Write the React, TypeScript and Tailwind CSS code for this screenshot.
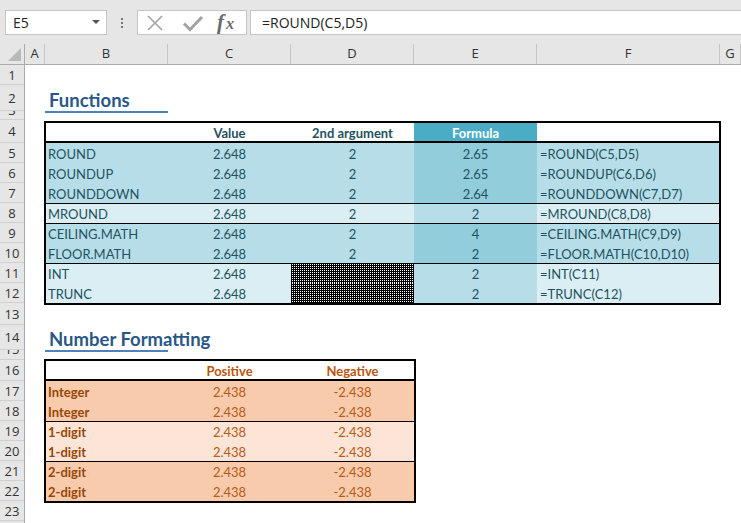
import React from "react";

const cellFont = "font-['Lato','Noto_Sans',sans-serif]";
const uiFont = "font-['Open_Sans','Noto_Sans',sans-serif]";

type Row1 = {
  b: string;
  c: string;
  d: string;
  e: string;
  f: string;
  bg: string;
  ebg: string;
  top?: boolean;
  pattern?: boolean;
};

const rows1: Row1[] = [
  { b: "ROUND", c: "2.648", d: "2", e: "2.65", f: "=ROUND(C5,D5)", bg: "bg-[#b7dee8]", ebg: "bg-[#92cddc]" },
  { b: "ROUNDUP", c: "2.648", d: "2", e: "2.65", f: "=ROUNDUP(C6,D6)", bg: "bg-[#b7dee8]", ebg: "bg-[#92cddc]" },
  { b: "ROUNDDOWN", c: "2.648", d: "2", e: "2.64", f: "=ROUNDDOWN(C7,D7)", bg: "bg-[#b7dee8]", ebg: "bg-[#92cddc]" },
  { b: "MROUND", c: "2.648", d: "2", e: "2", f: "=MROUND(C8,D8)", bg: "bg-[#daeef3]", ebg: "bg-[#b7dee8]", top: true },
  { b: "CEILING.MATH", c: "2.648", d: "2", e: "4", f: "=CEILING.MATH(C9,D9)", bg: "bg-[#b7dee8]", ebg: "bg-[#92cddc]", top: true },
  { b: "FLOOR.MATH", c: "2.648", d: "2", e: "2", f: "=FLOOR.MATH(C10,D10)", bg: "bg-[#b7dee8]", ebg: "bg-[#92cddc]" },
  { b: "INT", c: "2.648", d: "", e: "2", f: "=INT(C11)", bg: "bg-[#daeef3]", ebg: "bg-[#b7dee8]", top: true, pattern: true },
  { b: "TRUNC", c: "2.648", d: "", e: "2", f: "=TRUNC(C12)", bg: "bg-[#daeef3]", ebg: "bg-[#b7dee8]", pattern: true },
];

type Row2 = { b: string; bg: string; top?: boolean };
const rows2: Row2[] = [
  { b: "Integer", bg: "bg-[#f8cbad]" },
  { b: "Integer", bg: "bg-[#f8cbad]" },
  { b: "1-digit", bg: "bg-[#fce4d6]", top: true },
  { b: "1-digit", bg: "bg-[#fce4d6]" },
  { b: "2-digit", bg: "bg-[#f8cbad]", top: true },
  { b: "2-digit", bg: "bg-[#f8cbad]" },
];

const rowHeads: { n: string; h: string; small?: boolean }[] = [
  { n: "1", h: "h-[20px]" },
  { n: "2", h: "h-[26px]" },
  { n: "3", h: "h-[9px]", small: true },
  { n: "4", h: "h-[23px]" },
  { n: "5", h: "h-[20px]" },
  { n: "6", h: "h-[20px]" },
  { n: "7", h: "h-[20px]" },
  { n: "8", h: "h-[20px]" },
  { n: "9", h: "h-[20px]" },
  { n: "10", h: "h-[20px]" },
  { n: "11", h: "h-[20px]" },
  { n: "12", h: "h-[20px]" },
  { n: "13", h: "h-[22px]" },
  { n: "14", h: "h-[25px]" },
  { n: "15", h: "h-[10px]", small: true },
  { n: "16", h: "h-[21px]" },
  { n: "17", h: "h-[20px]" },
  { n: "18", h: "h-[20px]" },
  { n: "19", h: "h-[20px]" },
  { n: "20", h: "h-[20px]" },
  { n: "21", h: "h-[20px]" },
  { n: "22", h: "h-[20px]" },
  { n: "23", h: "h-[20px]" },
];

function Toolbar() {
  return (
    <div className="h-[44px] bg-[#e6e6e6] flex items-start pt-[10px]">
      <div className="ml-[5px] w-[102px] h-[25px] bg-white border border-[#c6c6c6] flex items-center justify-between pl-[7px] pr-[6px]">
        <span className={`${uiFont} text-[14px] text-[#222]`}>E5</span>
        <svg width="8" height="5" viewBox="0 0 8 5">
          <path d="M0 0 L8 0 L4 4 Z" fill="#555" />
        </svg>
      </div>
      <div className="w-[30px] h-[25px] flex items-center justify-center">
        <svg width="4" height="12" viewBox="0 0 4 12">
          <rect x="1" y="1" width="2" height="2" fill="#777" />
          <rect x="1" y="5" width="2" height="2" fill="#777" />
          <rect x="1" y="9" width="2" height="2" fill="#777" />
        </svg>
      </div>
      <div className="w-[110px] h-[25px] bg-white border border-[#c6c6c6] flex items-center">
        <svg width="108" height="23" viewBox="0 0 108 23">
          <path d="M10 5 L24 19 M24 5 L10 19" stroke="#a3a3a3" strokeWidth="1.6" fill="none" />
          <path d="M46 12.5 L52 18.5 L64 6" stroke="#a3a3a3" strokeWidth="3" fill="none" />
          <text x="79" y="18" fontFamily="'Liberation Serif',serif" fontStyle="italic" fontWeight="bold" fontSize="21" fill="#6a6a6a">f</text>
          <text x="88" y="18" fontFamily="'Liberation Serif',serif" fontStyle="italic" fontWeight="bold" fontSize="16" fill="#6a6a6a">x</text>
        </svg>
      </div>
      <div className="ml-[3px] flex-1 h-[25px] bg-white border-y border-l border-[#c6c6c6] flex items-center pl-[11px]">
        <span className={`${uiFont} text-[14px] text-[#222]`}>=ROUND(C5,D5)</span>
      </div>
    </div>
  );
}

function ColHeaders() {
  const cols: { l: string; w: string }[] = [
    { l: "A", w: "w-[20px]" },
    { l: "B", w: "w-[123px]" },
    { l: "C", w: "w-[123px]" },
    { l: "D", w: "w-[123px]" },
    { l: "E", w: "w-[123px]" },
    { l: "F", w: "w-[183px]" },
    { l: "G", w: "w-[21px]" },
  ];
  return (
    <div className="h-[21px] flex bg-[#e6e6e6] border-b border-[#ababab]">
      <div className="w-[25px] h-full border-r border-[#ababab] flex items-end justify-end pr-[3px] pb-[3px]">
        <svg width="13" height="13" viewBox="0 0 13 13">
          <path d="M13 0 L13 13 L0 13 Z" fill="#b8b8b8" />
        </svg>
      </div>
      {cols.map((c) => (
        <div
          key={c.l}
          className={`${c.w} h-full border-r border-[#c6c6c6] flex items-center justify-center ${uiFont} text-[13px] text-[#333]`}
        >
          {c.l}
        </div>
      ))}
    </div>
  );
}

function RowHeaders() {
  return (
    <div className="w-[25px] shrink-0 bg-[#e6e6e6] border-r border-[#ababab] flex flex-col">
      {rowHeads.map((r) => (
        <div
          key={r.n}
          className={`${r.h} shrink-0 overflow-hidden border-b border-[#d0d0d0] flex justify-center ${r.small ? "items-start" : "items-center"} ${uiFont} text-[13px] leading-[16px] text-[#333]`}
        >
          <span className={r.small ? "-mt-[9px]" : ""}>{r.n}</span>
        </div>
      ))}
    </div>
  );
}

function Table1() {
  return (
    <div className={`w-[677px] ml-[19px] border-2 border-black ${cellFont} text-[13px] leading-[16px] text-[#1f5261]`}>
      <div className="h-[20px] flex border-b-2 border-black bg-white font-bold">
        <div className="w-[122px]" />
        <div className="w-[123px] flex items-end justify-center">Value</div>
        <div className="w-[123px] flex items-end justify-center">2nd argument</div>
        <div className="w-[123px] flex items-end justify-center bg-[#4bacc6] text-white">Formula</div>
        <div className="w-[182px]" />
      </div>
      {rows1.map((r, i) => (
        <div key={i} className={`h-[20px] flex ${r.bg} ${r.top ? "border-t border-black" : ""}`}>
          <div className="w-[122px] flex items-end pl-[2px] pb-[1px]">{r.b}</div>
          <div className="w-[123px] flex items-end justify-center pb-[1px]">{r.c}</div>
          {r.pattern ? (
            <div className="w-[123px] bg-[image:conic-gradient(#ffffff_0_25%,#000000_0_100%)] bg-[length:2px_2px]" />
          ) : (
            <div className="w-[123px] flex items-end justify-center pb-[1px]">{r.d}</div>
          )}
          <div className={`w-[123px] flex items-end justify-center pb-[1px] ${r.ebg}`}>{r.e}</div>
          <div className="w-[182px] flex items-end pl-[3px] pb-[1px]">{r.f}</div>
        </div>
      ))}
    </div>
  );
}

function Table2() {
  return (
    <div className={`w-[372px] ml-[19px] border-2 border-black ${cellFont} text-[13px] leading-[16px]`}>
      <div className="h-[20px] flex border-b-2 border-black bg-white font-bold text-[#b9560f]">
        <div className="w-[122px]" />
        <div className="w-[123px] flex items-end justify-center">Positive</div>
        <div className="w-[123px] flex items-end justify-center">Negative</div>
      </div>
      {rows2.map((r, i) => (
        <div key={i} className={`h-[20px] flex ${r.bg} ${r.top ? "border-t border-black" : ""}`}>
          <div className="w-[122px] flex items-end pl-[2px] pb-[1px] font-bold text-[#974706]">{r.b}</div>
          <div className="w-[123px] flex items-end justify-center pb-[1px] text-[#b95a16]">2.438</div>
          <div className="w-[123px] flex items-end justify-center pb-[1px] text-[#b95a16]">-2.438</div>
        </div>
      ))}
    </div>
  );
}

function Title({ text, h }: { text: string; h: string }) {
  return (
    <div className={`${h} ml-[20px] w-[123px] border-b-2 border-[#4f81bd] flex items-end`}>
      <span className={`${cellFont} font-bold text-[18.5px] leading-[22px] text-[#2a5788] whitespace-nowrap pl-[4px]`}>
        {text}
      </span>
    </div>
  );
}

export default function App() {
  return (
    <div className="w-[741px] h-[523px] overflow-hidden bg-white flex flex-col">
      <Toolbar />
      <ColHeaders />
      <div className="flex flex-1 min-h-0">
        <RowHeaders />
        <div className="flex-1 flex flex-col bg-white">
          <div className="h-[20px] shrink-0" />
          <Title text="Functions" h="h-[28px]" />
          <div className="h-[8px] shrink-0" />
          <Table1 />
          <div className="h-[20px] shrink-0" />
          <Title text="Number Formatting" h="h-[27px]" />
          <div className="h-[7px] shrink-0" />
          <Table2 />
        </div>
      </div>
    </div>
  );
}
